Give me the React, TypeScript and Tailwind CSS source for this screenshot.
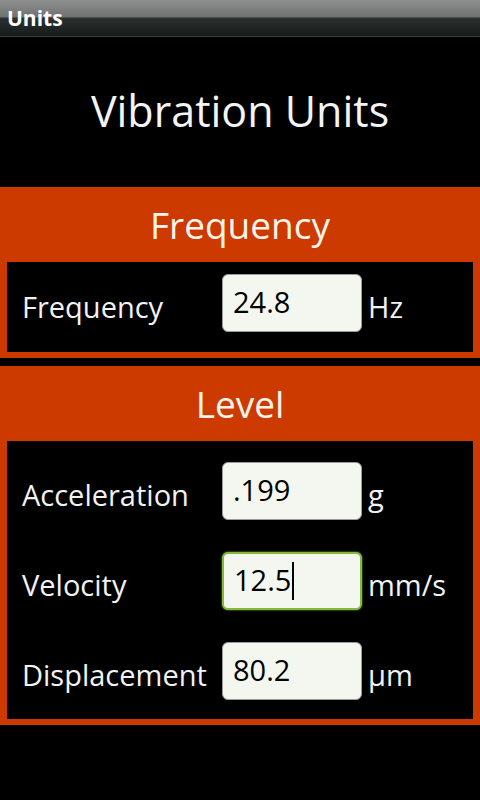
import React from "react";

const font = { fontFamily: '"Open Sans", "Noto Sans", sans-serif' };

function Field({ value, focused, cursor }: { value: string; focused?: boolean; cursor?: boolean }) {
  return (
    <div
      className={
        "w-[140px] h-[58px] rounded-[6px] bg-[#f4f7ef] flex items-center pl-[10px] text-[29px] text-black leading-none " +
        (focused ? "border-2 border-[#86b83c] shadow-[0_0_2px_#9cc95a]" : "border border-[#9a9a9a]")
      }
    >
      <span className="relative top-[-2px]">{value}</span>
      {cursor && <span className="inline-block w-[2px] h-[38px] bg-black ml-[1px]" />}
    </div>
  );
}

function Row({ label, value, unit, focused, cursor }: { label: string; value: string; unit: string; focused?: boolean; cursor?: boolean }) {
  return (
    <div className="flex items-center h-[58px]">
      <div className="w-[215px] pl-[15px] text-[29px] text-[#f2f2f2] leading-none pt-[6px] whitespace-nowrap">{label}</div>
      <Field value={value} focused={focused} cursor={cursor} />
      <div className="pl-[6px] text-[29px] text-[#f2f2f2] leading-none pt-[6px]">{unit}</div>
    </div>
  );
}

export default function App() {
  return (
    <div className="w-[480px] h-[800px] bg-black overflow-hidden" style={font}>
      <div className="h-[37px] border-b border-[#3a3e3e] bg-[linear-gradient(to_bottom,#8e908f_0px,#6f7271_17px,#2c3130_18px,#171a1a_36px)] flex items-center pl-[7px]">
        <span className="text-[21px] font-bold text-white leading-none">Units</span>
      </div>
      <div className="h-[150px] flex items-center justify-center">
        <span className="text-[43px] text-[#f4f4f4] leading-none relative top-[-2px]">Vibration Units</span>
      </div>
      <div className="bg-[#cc3a00] px-[7px] pb-[6px]">
        <div className="h-[75px] flex items-center justify-center">
          <span className="text-[37px] text-[#fbf4ea] leading-none">Frequency</span>
        </div>
        <div className="bg-black h-[90px] pt-[12px]">
          <Row label="Frequency" value="24.8" unit="Hz" />
        </div>
      </div>
      <div className="h-[8px]" />
      <div className="bg-[#cc3a00] px-[7px] pb-[6px]">
        <div className="h-[75px] flex items-center justify-center">
          <span className="text-[37px] text-[#fbf4ea] leading-none">Level</span>
        </div>
        <div className="bg-black pt-[21px] pb-[19px] flex flex-col gap-[32px]">
          <Row label="Acceleration" value=".199" unit="g" />
          <Row label="Velocity" value="12.5" unit="mm/s" focused cursor />
          <Row label="Displacement" value="80.2" unit="µm" />
        </div>
      </div>
    </div>
  );
}
